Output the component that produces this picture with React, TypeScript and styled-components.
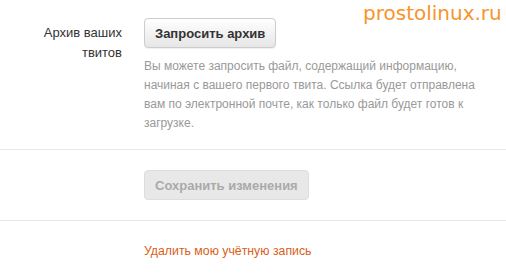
import { FC } from "react";
import styled, { createGlobalStyle } from "styled-components";

const Global = createGlobalStyle`
    html, body {
        margin: 0;
        padding: 0;
        background: #fff;
    }
    body {
        font-family: "Liberation Sans", Arial, sans-serif;
        color: #333;
    }
`;

const Page = styled.div`
    position: relative;
    width: 506px;
    height: 278px;
    overflow: hidden;
`;

const Watermark = styled.div`
    position: absolute;
    top: 1px;
    left: 363px;
    font-family: "DejaVu Sans", sans-serif;
    font-size: 20px;
    line-height: 24px;
    color: #f7942c;
`;

const Section = styled.div<{ $pt: number; $pb: number; $divider?: boolean }>`
    display: flex;
    padding: ${(p) => p.$pt}px 0 ${(p) => p.$pb}px;
    border-top: ${(p) => (p.$divider ? "1px solid #e8e8e8" : "none")};
`;

const Label = styled.div`
    width: 122px;
    padding-top: 5px;
    text-align: right;
    font-size: 13px;
    line-height: 20px;
    color: #333;
`;

const Controls = styled.div<{ $offset?: number }>`
    margin-left: ${(p) => p.$offset ?? 22}px;
    flex: 1;
`;

const Button = styled.button<{ $disabled?: boolean }>`
    display: block;
    height: 30px;
    padding: 0 10px;
    border-radius: 4px;
    font-family: "Liberation Sans", Arial, sans-serif;
    font-size: 13px;
    font-weight: bold;
    border: 1px solid ${(p) => (p.$disabled ? "#ddd" : "#ccc")};
    color: ${(p) => (p.$disabled ? "#aaa" : "#333")};
    background: ${(p) =>
        p.$disabled ? "#e8e8e8" : "linear-gradient(#fff, #e6e6e6)"};
    box-shadow: ${(p) => (p.$disabled ? "none" : "0 1px 0 rgba(0,0,0,0.05)")};
`;

const Help = styled.p`
    margin: 9px 0 0;
    width: 345px;
    font-size: 12px;
    line-height: 19px;
    color: #999;
`;

const Link = styled.a`
    display: block;
    margin-left: 144px;
    font-size: 12.3px;
    line-height: 16px;
    color: #d9601a;
    text-decoration: none;
`;

const App: FC = () => {
    return (
        <Page>
            <Global />
            <Watermark>prostolinux.ru</Watermark>
            <Section $pt={18} $pb={16}>
                <Label>
                    Архив ваших
                    <br />
                    твитов
                </Label>
                <Controls>
                    <Button>Запросить архив</Button>
                    <Help>
                        Вы можете запросить файл, содержащий информацию,
                        начиная с вашего первого твита. Ссылка будет
                        отправлена вам по электронной почте, как только файл
                        будет готов к загрузке.
                    </Help>
                </Controls>
            </Section>
            <Section $pt={20} $pb={20} $divider>
                <Controls $offset={144}>
                    <Button $disabled>Сохранить изменения</Button>
                </Controls>
            </Section>
            <Section $pt={22} $pb={22} $divider>
                <Link href="#">Удалить мою учётную запись</Link>
            </Section>
        </Page>
    );
};

export default App;
